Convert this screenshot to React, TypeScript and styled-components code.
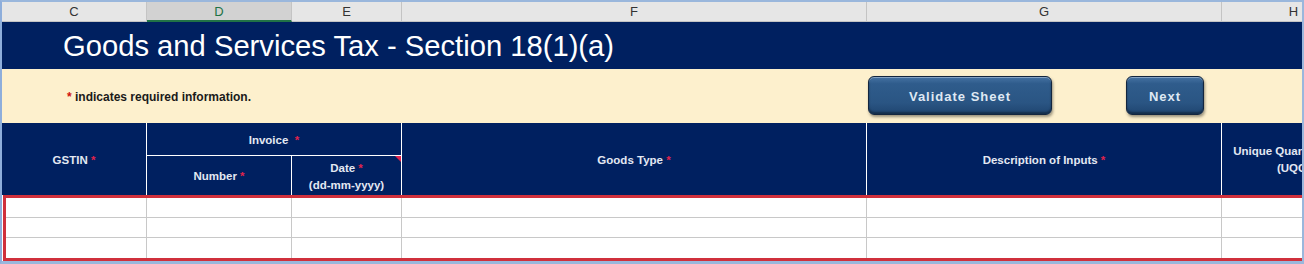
import React from "react";
import styled, { createGlobalStyle, css } from "styled-components";

const GlobalStyle = createGlobalStyle`
  html, body { margin: 0; padding: 0; background: #ffffff; }
  body { font-family: "Liberation Sans", Arial, sans-serif; }
  * { box-sizing: border-box; }
`;

const NAVY = "#002060";
const RED = "#d0303c";
const GRID = "#c8c8c8";

type Col = { key: string; width: number };
const COLUMNS: Col[] = [
  { key: "C", width: 145 },
  { key: "D", width: 145 },
  { key: "E", width: 110 },
  { key: "F", width: 465 },
  { key: "G", width: 355 },
  { key: "H", width: 144 },
];
const template = COLUMNS.map((c) => `${c.width}px`).join(" ");

const Sheet = styled.div`
  width: 1304px;
  height: 264px;
  overflow: hidden;
  border-top: 2px solid #9ab7dc;
  border-left: 2px solid #8eaedb;
  border-right: 2px solid #9ab7dc;
  border-bottom: 3px solid #9ab7dc;
  background: #ffffff;
`;

const Inner = styled.div`
  width: 1363px;
`;

const ColumnHeaders = styled.div`
  display: grid;
  grid-template-columns: ${template};
  height: 20px;
  background: #e6e6e6;
`;

const ColumnLetter = styled.div<{ $selected?: boolean }>`
  display: flex;
  align-items: center;
  justify-content: center;
  font-family: "Liberation Sans", Arial, sans-serif;
  font-size: 13px;
  color: #333333;
  border-right: 1px solid #c4c4c4;
  border-bottom: 1px solid #c4c4c4;
  ${(p) =>
    p.$selected &&
    css`
      background: #d2d2d2;
      color: #217346;
      border-bottom: 2px solid #217346;
    `}
`;

const TitleBar = styled.div`
  height: 47px;
  background: ${NAVY};
  display: flex;
  align-items: center;
  padding-left: 61px;
  padding-top: 2px;
`;

const Title = styled.h1`
  margin: 0;
  font-family: "Liberation Sans", Arial, sans-serif;
  font-weight: normal;
  font-size: 29.2px;
  color: #ffffff;
  line-height: 1;
`;

const InfoBar = styled.div`
  position: relative;
  height: 54px;
  background: #fdf0cd;
  display: flex;
  align-items: center;
  padding-left: 65px;
  padding-top: 2px;
`;

const Note = styled.span`
  font-family: "Liberation Sans", Arial, sans-serif;
  font-weight: bold;
  font-size: 12px;
  color: #1a1a1a;
`;

const Star = styled.span<{ $onDark?: boolean }>`
  color: ${(p) => (p.$onDark ? "#e0234c" : "#d01010")};
  font-weight: bold;
`;

const ButtonLayer = styled.div`
  position: absolute;
  left: 866px;
  top: 7px;
  display: flex;
  gap: 74px;
`;

const SheetButton = styled.button<{ $w: number }>`
  width: ${(p) => p.$w}px;
  height: 39px;
  border-radius: 6px;
  border: 1px solid #13263f;
  background: linear-gradient(180deg, #4673a3 0%, #2f5c8c 18%, #2a5583 70%, #1f4570 100%);
  box-shadow: inset 0 1px 0 rgba(255, 255, 255, 0.35), inset 0 -2px 2px rgba(0, 0, 0, 0.35),
    1px 2px 3px rgba(0, 0, 0, 0.4);
  color: #dfe8f3;
  font-family: "Liberation Sans", Arial, sans-serif;
  font-weight: bold;
  font-size: 13px;
  letter-spacing: 1px;
  padding: 2px 0 0 0;
  cursor: pointer;
`;

const HeaderBlock = styled.div`
  display: grid;
  grid-template-columns: ${template};
  grid-template-rows: 33px 39px;
  height: 72px;
  background: ${NAVY};
`;

const HeadCell = styled.div<{ $row?: string; $col?: string; $bottomLine?: boolean }>`
  position: relative;
  grid-row: ${(p) => p.$row || "1 / span 2"};
  grid-column: ${(p) => p.$col || "auto"};
  display: flex;
  flex-direction: column;
  align-items: center;
  justify-content: center;
  text-align: center;
  padding-top: 2px;
  border-right: 1px solid #ffffff;
  ${(p) => p.$bottomLine && "border-bottom: 1px solid #ffffff;"}
  font-family: "Liberation Sans", Arial, sans-serif;
  font-weight: bold;
  font-size: 11.5px;
  line-height: 17px;
  color: #e3e8f2;
  white-space: nowrap;
`;

const CommentMark = styled.span`
  position: absolute;
  top: 0;
  right: 0;
  width: 0;
  height: 0;
  border-top: 6px solid #e0234c;
  border-left: 6px solid transparent;
`;

const DataBlock = styled.div`
  margin-left: 1px;
  border-top: 3px solid ${RED};
  border-bottom: 3px solid ${RED};
  border-left: 3px solid ${RED};
`;

const DataGrid = styled.div`
  display: grid;
  grid-template-columns: 141px ${COLUMNS.slice(1)
    .map((c) => `${c.width}px`)
    .join(" ")};
  grid-auto-rows: 20px;
`;

const DataCell = styled.div<{ $last?: boolean }>`
  border-right: 1px solid ${GRID};
  border-bottom: ${(p) => (p.$last ? "none" : `1px solid ${GRID}`)};
  background: #ffffff;
`;

const App: React.FC = () => {
  const rows = [0, 1, 2];
  return (
    <>
      <GlobalStyle />
      <Sheet>
        <Inner>
          <ColumnHeaders>
            {COLUMNS.map((c) => (
              <ColumnLetter key={c.key} $selected={c.key === "D"}>
                {c.key}
              </ColumnLetter>
            ))}
          </ColumnHeaders>

          <TitleBar>
            <Title>Goods and Services Tax - Section 18(1)(a)</Title>
          </TitleBar>

          <InfoBar>
            <Note>
              <Star>*</Star> indicates required information.
            </Note>
            <ButtonLayer>
              <SheetButton $w={184}>Validate Sheet</SheetButton>
              <SheetButton $w={78}>Next</SheetButton>
            </ButtonLayer>
          </InfoBar>

          <HeaderBlock>
            <HeadCell $col="1">
              <span>
                GSTIN <Star $onDark>*</Star>
              </span>
            </HeadCell>
            <HeadCell $row="1" $col="2 / span 2" $bottomLine>
              <span>
                Invoice&nbsp; <Star $onDark>*</Star>
              </span>
            </HeadCell>
            <HeadCell $row="2" $col="2">
              <span>
                Number <Star $onDark>*</Star>
              </span>
            </HeadCell>
            <HeadCell $row="2" $col="3">
              <CommentMark />
              <span>
                Date <Star $onDark>*</Star>
              </span>
              <span>(dd-mm-yyyy)</span>
            </HeadCell>
            <HeadCell $col="4">
              <span>
                Goods Type <Star $onDark>*</Star>
              </span>
            </HeadCell>
            <HeadCell $col="5">
              <span>
                Description of Inputs <Star $onDark>*</Star>
              </span>
            </HeadCell>
            <HeadCell $col="6">
              <span>Unique Quantity Code</span>
              <span>(UQC)</span>
            </HeadCell>
          </HeaderBlock>

          <DataBlock>
            <DataGrid>
              {rows.map((r) =>
                COLUMNS.map((c) => <DataCell key={`${r}-${c.key}`} $last={r === rows.length - 1} />)
              )}
            </DataGrid>
          </DataBlock>
        </Inner>
      </Sheet>
    </>
  );
};

export default App;
